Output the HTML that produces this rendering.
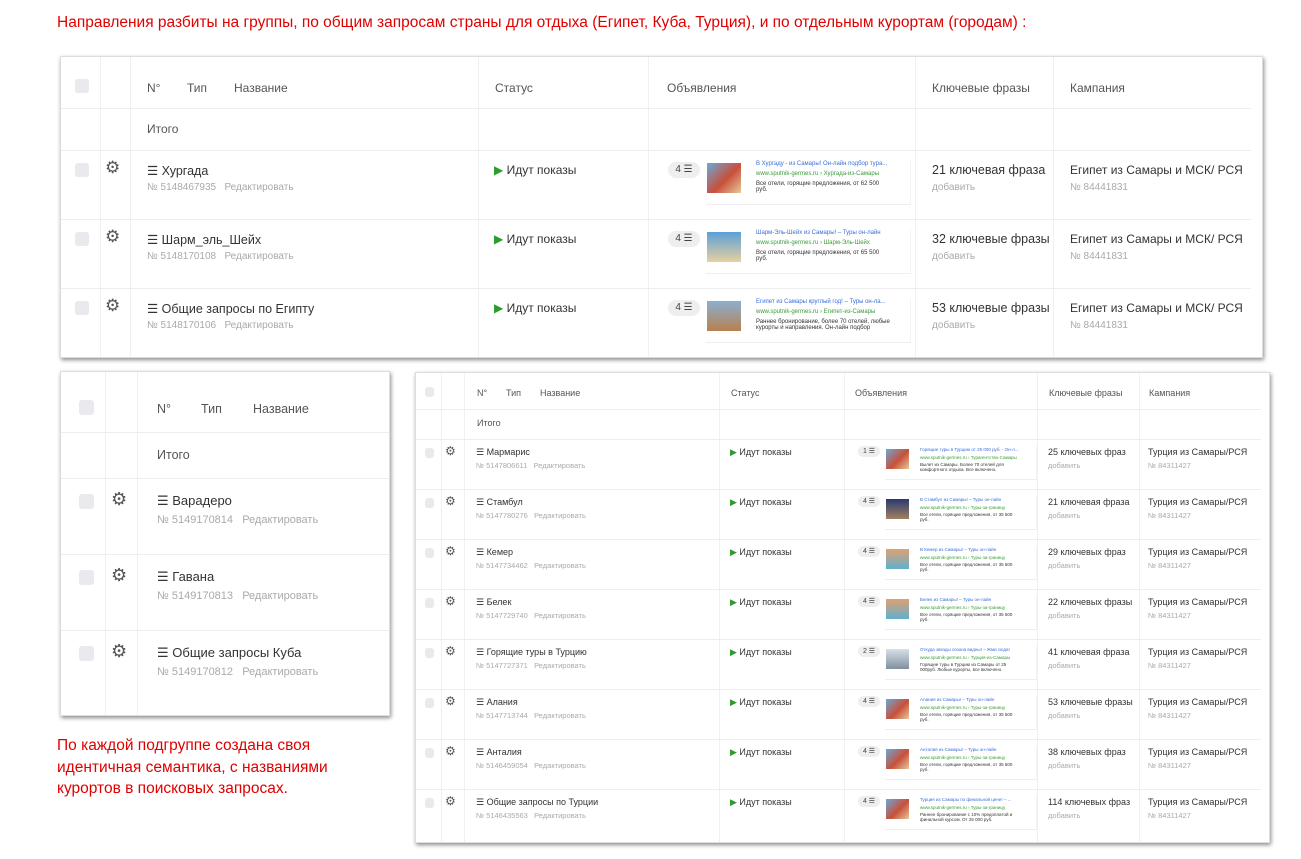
<!DOCTYPE html>
<html><head><meta charset="utf-8"><style>
*{margin:0;padding:0;box-sizing:border-box}
body{width:1301px;height:859px;background:#fff;position:relative;overflow:hidden;font-family:"Liberation Sans","DejaVu Sans",sans-serif;color:#333}
.a{position:absolute;white-space:nowrap}
.red{color:#e00000;font-size:15.5px}
.panel{position:absolute;background:#fff;box-shadow:1px 2px 4px rgba(0,0,0,.45);border:1px solid #ddd}
.hl{position:absolute;height:1px;background:#eee}
.vl{position:absolute;width:1px;background:#f0f0f0}
.cb{position:absolute;background:#e9e9ee;border-radius:3px}
.g{color:#aaa}
.gear{position:absolute;color:#555;font-family:"DejaVu Sans",sans-serif}
.grn{color:#2a9d2a}
.badge{position:absolute;background:#eee;border-radius:8px;color:#444;text-align:center}
.img{position:absolute;background:linear-gradient(135deg,#6aa9d8,#c8503a 55%,#e8c89a)}
.ad{position:absolute;border-bottom:1px solid #eee;border-right:1px solid #f3f3f3}
.blue{color:#3b6fd8}.lg{color:#3a9b3a}
</style></head><body>
<div class="a red" style="left:57px;top:14px">Направления разбиты на группы, по общим запросам страны для отдыха (Египет, Куба, Турция), и по отдельным курортам (городам) :</div>

<!-- Table 1 -->
<div class="panel" style="left:60px;top:56px;width:1203px;height:302px;font-size:12px">
<div class="vl" style="left:39px;top:0;height:300px"></div><div class="vl" style="left:69px;top:0;height:300px"></div>
<div class="vl" style="left:417px;top:0;height:300px"></div><div class="vl" style="left:587px;top:0;height:300px"></div>
<div class="vl" style="left:854px;top:0;height:300px"></div><div class="vl" style="left:992px;top:0;height:300px"></div>
<div class="hl" style="left:0;top:51px;width:1190px"></div><div class="hl" style="left:0;top:93px;width:1190px"></div>
<div class="hl" style="left:0;top:162px;width:1190px"></div><div class="hl" style="left:0;top:231px;width:1190px"></div>
<div class="cb" style="left:14px;top:22px;width:14px;height:14px"></div>
<div class="a" style="left:86px;top:24px;color:#555">N°</div><div class="a" style="left:126px;top:24px;color:#555">Тип</div><div class="a" style="left:173px;top:24px;color:#555">Название</div>
<div class="a" style="left:434px;top:24px;color:#555">Статус</div><div class="a" style="left:606px;top:24px;color:#555">Объявления</div>
<div class="a" style="left:871px;top:24px;color:#555">Ключевые фразы</div><div class="a" style="left:1009px;top:24px;color:#555">Кампания</div>
<div class="a" style="left:86px;top:65px;color:#555">Итого</div>

<div class="cb" style="left:14px;top:106px;width:14px;height:14px"></div><div class="gear a" style="left:44px;top:101px;font-size:17px">⚙</div>
<div class="a" style="left:86px;top:106px;font-size:12.5px">☰ Хургада</div><div class="a g" style="left:86px;top:125px;font-size:10px">№ 5148467935 &nbsp; Редактировать</div>
<div class="a" style="left:433px;top:106px"><span class="grn">▶</span> Идут показы</div>
<div class="badge" style="left:607px;top:105px;width:32px;height:16px;font-size:10px;line-height:16px">4 ☰</div>
<div class="img" style="left:646px;top:106px;width:34px;height:30px"></div>
<div class="ad" style="left:645px;top:104px;width:205px;height:44px"></div>
<div class="a blue" style="left:695px;top:104px;font-size:6px">В Хургаду - из Самары! Он-лайн подбор тура...</div>
<div class="a lg" style="left:695px;top:114px;font-size:6px">www.sputnik-germes.ru › Хургада-из-Самары</div>
<div class="a" style="left:695px;top:124px;font-size:6px">Все отели, горящие предложения, от 62 500<br>руб.</div>
<div class="a" style="left:871px;top:106px;font-size:12.5px">21 ключевая фраза</div><div class="a g" style="left:871px;top:125px;font-size:10px">добавить</div>
<div class="a" style="left:1009px;top:106px;font-size:12px">Египет из Самары и МСК/ РСЯ</div><div class="a g" style="left:1009px;top:125px;font-size:10px">№ 84441831</div>

<div class="cb" style="left:14px;top:175px;width:14px;height:14px"></div><div class="gear a" style="left:44px;top:170px;font-size:17px">⚙</div>
<div class="a" style="left:86px;top:175px;font-size:12.5px">☰ Шарм_эль_Шейх</div><div class="a g" style="left:86px;top:194px;font-size:10px">№ 5148170108 &nbsp; Редактировать</div>
<div class="a" style="left:433px;top:175px"><span class="grn">▶</span> Идут показы</div>
<div class="badge" style="left:607px;top:174px;width:32px;height:16px;font-size:10px;line-height:16px">4 ☰</div>
<div class="img" style="left:646px;top:175px;width:34px;height:30px;background:linear-gradient(#5aa0d8,#e8d0a0)"></div>
<div class="ad" style="left:645px;top:173px;width:205px;height:44px"></div>
<div class="a blue" style="left:695px;top:173px;font-size:6px">Шарм-Эль-Шейх из Самары! – Туры он-лайн</div>
<div class="a lg" style="left:695px;top:183px;font-size:6px">www.sputnik-germes.ru › Шарм-Эль-Шейх</div>
<div class="a" style="left:695px;top:193px;font-size:6px">Все отели, горящие предложения, от 65 500<br>руб.</div>
<div class="a" style="left:871px;top:175px;font-size:12.5px">32 ключевые фразы</div><div class="a g" style="left:871px;top:194px;font-size:10px">добавить</div>
<div class="a" style="left:1009px;top:175px;font-size:12px">Египет из Самары и МСК/ РСЯ</div><div class="a g" style="left:1009px;top:194px;font-size:10px">№ 84441831</div>

<div class="cb" style="left:14px;top:244px;width:14px;height:14px"></div><div class="gear a" style="left:44px;top:239px;font-size:17px">⚙</div>
<div class="a" style="left:86px;top:244px;font-size:12.5px">☰ Общие запросы по Египту</div><div class="a g" style="left:86px;top:263px;font-size:10px">№ 5148170106 &nbsp; Редактировать</div>
<div class="a" style="left:433px;top:244px"><span class="grn">▶</span> Идут показы</div>
<div class="badge" style="left:607px;top:243px;width:32px;height:16px;font-size:10px;line-height:16px">4 ☰</div>
<div class="img" style="left:646px;top:244px;width:34px;height:30px;background:linear-gradient(#8ab0d0,#b88050)"></div>
<div class="ad" style="left:645px;top:242px;width:205px;height:44px"></div>
<div class="a blue" style="left:695px;top:242px;font-size:6px">Египет из Самары круглый год! – Туры он-ла...</div>
<div class="a lg" style="left:695px;top:252px;font-size:6px">www.sputnik-germes.ru › Египет-из-Самары</div>
<div class="a" style="left:695px;top:262px;font-size:6px">Раннее бронирование, более 70 отелей, любые<br>курорты и направления. Он-лайн подбор</div>
<div class="a" style="left:871px;top:244px;font-size:12.5px">53 ключевые фразы</div><div class="a g" style="left:871px;top:263px;font-size:10px">добавить</div>
<div class="a" style="left:1009px;top:244px;font-size:12px">Египет из Самары и МСК/ РСЯ</div><div class="a g" style="left:1009px;top:263px;font-size:10px">№ 84441831</div>
</div>

<!-- Table 2 -->
<div class="panel" style="left:60px;top:371px;width:330px;height:345px;font-size:12.5px">
<div class="vl" style="left:44px;top:0;height:343px"></div><div class="vl" style="left:76px;top:0;height:343px"></div>
<div class="hl" style="left:0;top:60px;width:328px"></div><div class="hl" style="left:0;top:106px;width:328px"></div>
<div class="hl" style="left:0;top:182px;width:328px"></div><div class="hl" style="left:0;top:258px;width:328px"></div>
<div class="cb" style="left:18px;top:28px;width:15px;height:15px"></div>
<div class="a" style="left:96px;top:30px;color:#555">N°</div><div class="a" style="left:140px;top:30px;color:#555">Тип</div><div class="a" style="left:192px;top:30px;color:#555">Название</div>
<div class="a" style="left:96px;top:76px;color:#555">Итого</div>
<div class="cb" style="left:18px;top:122px;width:15px;height:15px"></div><div class="gear a" style="left:50px;top:117px;font-size:18px">⚙</div>
<div class="a" style="left:96px;top:121px;font-size:13px">☰ Варадеро</div><div class="a g" style="left:96px;top:142px;font-size:11px">№ 5149170814 &nbsp; Редактировать</div>
<div class="cb" style="left:18px;top:198px;width:15px;height:15px"></div><div class="gear a" style="left:50px;top:193px;font-size:18px">⚙</div>
<div class="a" style="left:96px;top:197px;font-size:13px">☰ Гавана</div><div class="a g" style="left:96px;top:218px;font-size:11px">№ 5149170813 &nbsp; Редактировать</div>
<div class="cb" style="left:18px;top:274px;width:15px;height:15px"></div><div class="gear a" style="left:50px;top:269px;font-size:18px">⚙</div>
<div class="a" style="left:96px;top:273px;font-size:13px">☰ Общие запросы Куба</div><div class="a g" style="left:96px;top:294px;font-size:11px">№ 5149170812 &nbsp; Редактировать</div>
</div>

<div class="a red" style="left:57px;top:735px;line-height:21.5px">По каждой подгруппе создана своя<br>идентичная семантика, с названиями<br>курортов в поисковых запросах.</div>

<!-- Table 3 -->
<div class="panel" style="left:415px;top:372px;width:855px;height:471px;font-size:9px">
<div class="vl" style="left:25px;top:0;height:469px"></div><div class="vl" style="left:48px;top:0;height:469px"></div>
<div class="vl" style="left:303px;top:0;height:469px"></div><div class="vl" style="left:428px;top:0;height:469px"></div>
<div class="vl" style="left:621px;top:0;height:469px"></div><div class="vl" style="left:723px;top:0;height:469px"></div>
<div class="hl" style="left:0;top:36px;width:845px"></div><div class="hl" style="left:0;top:66px;width:845px"></div>
<div class="hl" style="left:0;top:116px;width:845px"></div><div class="hl" style="left:0;top:166px;width:845px"></div>
<div class="hl" style="left:0;top:216px;width:845px"></div><div class="hl" style="left:0;top:266px;width:845px"></div>
<div class="hl" style="left:0;top:316px;width:845px"></div><div class="hl" style="left:0;top:366px;width:845px"></div>
<div class="hl" style="left:0;top:416px;width:845px"></div>
<div class="cb" style="left:9px;top:14px;width:9px;height:10px"></div>
<div class="a" style="left:61px;top:15px;color:#555">N°</div><div class="a" style="left:90px;top:15px;color:#555">Тип</div><div class="a" style="left:124px;top:15px;color:#555">Название</div>
<div class="a" style="left:315px;top:15px;color:#555">Статус</div><div class="a" style="left:439px;top:15px;color:#555">Объявления</div>
<div class="a" style="left:633px;top:15px;color:#555">Ключевые фразы</div><div class="a" style="left:733px;top:15px;color:#555">Кампания</div>
<div class="a" style="left:61px;top:45px;color:#555">Итого</div>
</div>
<div style="position:absolute;left:415px;top:372px;font-size:9px">
<div class="cb" style="left:10px;top:76px;width:9px;height:10px"></div><div class="gear a" style="left:30px;top:72px;font-size:12px">⚙</div>
<div class="a" style="left:61px;top:75px">☰ Мармарис</div><div class="a g" style="left:61px;top:89px;font-size:7.5px">№ 5147806611 &nbsp; Редактировать</div>
<div class="a" style="left:315px;top:75px"><span class="grn">▶</span> Идут показы</div>
<div class="badge" style="left:443px;top:74px;width:22px;height:11px;font-size:7px;line-height:11px">1 ☰</div>
<div class="img" style="left:471px;top:77px;width:23px;height:20px"></div><div class="ad" style="left:470px;top:74px;width:152px;height:34px"></div>
<div class="a blue" style="left:505px;top:75px;font-size:4.5px">Горящие туры в Турцию от 25 000 руб. - Он-л...</div><div class="a lg" style="left:505px;top:83px;font-size:4.5px">www.sputnik-germes.ru › Турагентство-Самары</div><div class="a" style="left:505px;top:90px;font-size:4.5px">Вылет из Самары. Более 70 отелей для<br>комфортного отдыха. Все включено.</div>
<div class="a" style="left:633px;top:75px">25 ключевых фраз</div><div class="a g" style="left:633px;top:89px;font-size:7.5px">добавить</div>
<div class="a" style="left:733px;top:75px">Турция из Самары/РСЯ</div><div class="a g" style="left:733px;top:89px;font-size:7.5px">№ 84311427</div>

<div class="cb" style="left:10px;top:126px;width:9px;height:10px"></div><div class="gear a" style="left:30px;top:122px;font-size:12px">⚙</div>
<div class="a" style="left:61px;top:125px">☰ Стамбул</div><div class="a g" style="left:61px;top:139px;font-size:7.5px">№ 5147780276 &nbsp; Редактировать</div>
<div class="a" style="left:315px;top:125px"><span class="grn">▶</span> Идут показы</div>
<div class="badge" style="left:443px;top:124px;width:22px;height:11px;font-size:7px;line-height:11px">4 ☰</div>
<div class="img" style="left:471px;top:127px;width:23px;height:20px;background:linear-gradient(#2a3a70,#a08060)"></div><div class="ad" style="left:470px;top:124px;width:152px;height:34px"></div>
<div class="a blue" style="left:505px;top:125px;font-size:4.5px">В Стамбул из Самары! – Туры он-лайн</div><div class="a lg" style="left:505px;top:133px;font-size:4.5px">www.sputnik-germes.ru › Туры-за-границу</div><div class="a" style="left:505px;top:140px;font-size:4.5px">Все отели, горящие предложения, от 35 500<br>руб.</div>
<div class="a" style="left:633px;top:125px">21 ключевая фраза</div><div class="a g" style="left:633px;top:139px;font-size:7.5px">добавить</div>
<div class="a" style="left:733px;top:125px">Турция из Самары/РСЯ</div><div class="a g" style="left:733px;top:139px;font-size:7.5px">№ 84311427</div>

<div class="cb" style="left:10px;top:176px;width:9px;height:10px"></div><div class="gear a" style="left:30px;top:172px;font-size:12px">⚙</div>
<div class="a" style="left:61px;top:175px">☰ Кемер</div><div class="a g" style="left:61px;top:189px;font-size:7.5px">№ 5147734462 &nbsp; Редактировать</div>
<div class="a" style="left:315px;top:175px"><span class="grn">▶</span> Идут показы</div>
<div class="badge" style="left:443px;top:174px;width:22px;height:11px;font-size:7px;line-height:11px">4 ☰</div>
<div class="img" style="left:471px;top:177px;width:23px;height:20px;background:linear-gradient(#e0a070,#60b0d0)"></div><div class="ad" style="left:470px;top:174px;width:152px;height:34px"></div>
<div class="a blue" style="left:505px;top:175px;font-size:4.5px">В Кемер из Самары! – Туры он-лайн</div><div class="a lg" style="left:505px;top:183px;font-size:4.5px">www.sputnik-germes.ru › Туры-за-границу</div><div class="a" style="left:505px;top:190px;font-size:4.5px">Все отели, горящие предложения, от 35 500<br>руб.</div>
<div class="a" style="left:633px;top:175px">29 ключевых фраз</div><div class="a g" style="left:633px;top:189px;font-size:7.5px">добавить</div>
<div class="a" style="left:733px;top:175px">Турция из Самары/РСЯ</div><div class="a g" style="left:733px;top:189px;font-size:7.5px">№ 84311427</div>

<div class="cb" style="left:10px;top:226px;width:9px;height:10px"></div><div class="gear a" style="left:30px;top:222px;font-size:12px">⚙</div>
<div class="a" style="left:61px;top:225px">☰ Белек</div><div class="a g" style="left:61px;top:239px;font-size:7.5px">№ 5147729740 &nbsp; Редактировать</div>
<div class="a" style="left:315px;top:225px"><span class="grn">▶</span> Идут показы</div>
<div class="badge" style="left:443px;top:224px;width:22px;height:11px;font-size:7px;line-height:11px">4 ☰</div>
<div class="img" style="left:471px;top:227px;width:23px;height:20px;background:linear-gradient(#e0a070,#60b0d0)"></div><div class="ad" style="left:470px;top:224px;width:152px;height:34px"></div>
<div class="a blue" style="left:505px;top:225px;font-size:4.5px">Белек из Самары! – Туры он-лайн</div><div class="a lg" style="left:505px;top:233px;font-size:4.5px">www.sputnik-germes.ru › Туры-за-границу</div><div class="a" style="left:505px;top:240px;font-size:4.5px">Все отели, горящие предложения, от 35 500<br>руб.</div>
<div class="a" style="left:633px;top:225px">22 ключевых фразы</div><div class="a g" style="left:633px;top:239px;font-size:7.5px">добавить</div>
<div class="a" style="left:733px;top:225px">Турция из Самары/РСЯ</div><div class="a g" style="left:733px;top:239px;font-size:7.5px">№ 84311427</div>

<div class="cb" style="left:10px;top:276px;width:9px;height:10px"></div><div class="gear a" style="left:30px;top:272px;font-size:12px">⚙</div>
<div class="a" style="left:61px;top:275px">☰ Горящие туры в Турцию</div><div class="a g" style="left:61px;top:289px;font-size:7.5px">№ 5147727371 &nbsp; Редактировать</div>
<div class="a" style="left:315px;top:275px"><span class="grn">▶</span> Идут показы</div>
<div class="badge" style="left:443px;top:274px;width:22px;height:11px;font-size:7px;line-height:11px">2 ☰</div>
<div class="img" style="left:471px;top:277px;width:23px;height:20px;background:linear-gradient(#d8e0e8,#8090a0)"></div><div class="ad" style="left:470px;top:274px;width:152px;height:34px"></div>
<div class="a blue" style="left:505px;top:275px;font-size:4.5px">Откуда звезды сезона видны! – Жми сюда!</div><div class="a lg" style="left:505px;top:283px;font-size:4.5px">www.sputnik-germes.ru › Турция-из-Самары</div><div class="a" style="left:505px;top:290px;font-size:4.5px">Горящие туры в Турцию из Самары от 25<br>000руб. Любые курорты, все включено.</div>
<div class="a" style="left:633px;top:275px">41 ключевая фраза</div><div class="a g" style="left:633px;top:289px;font-size:7.5px">добавить</div>
<div class="a" style="left:733px;top:275px">Турция из Самары/РСЯ</div><div class="a g" style="left:733px;top:289px;font-size:7.5px">№ 84311427</div>

<div class="cb" style="left:10px;top:326px;width:9px;height:10px"></div><div class="gear a" style="left:30px;top:322px;font-size:12px">⚙</div>
<div class="a" style="left:61px;top:325px">☰ Алания</div><div class="a g" style="left:61px;top:339px;font-size:7.5px">№ 5147713744 &nbsp; Редактировать</div>
<div class="a" style="left:315px;top:325px"><span class="grn">▶</span> Идут показы</div>
<div class="badge" style="left:443px;top:324px;width:22px;height:11px;font-size:7px;line-height:11px">4 ☰</div>
<div class="img" style="left:471px;top:327px;width:23px;height:20px"></div><div class="ad" style="left:470px;top:324px;width:152px;height:34px"></div>
<div class="a blue" style="left:505px;top:325px;font-size:4.5px">Алания из Самары! – Туры он-лайн</div><div class="a lg" style="left:505px;top:333px;font-size:4.5px">www.sputnik-germes.ru › Туры-за-границу</div><div class="a" style="left:505px;top:340px;font-size:4.5px">Все отели, горящие предложения, от 35 500<br>руб.</div>
<div class="a" style="left:633px;top:325px">53 ключевые фразы</div><div class="a g" style="left:633px;top:339px;font-size:7.5px">добавить</div>
<div class="a" style="left:733px;top:325px">Турция из Самары/РСЯ</div><div class="a g" style="left:733px;top:339px;font-size:7.5px">№ 84311427</div>

<div class="cb" style="left:10px;top:376px;width:9px;height:10px"></div><div class="gear a" style="left:30px;top:372px;font-size:12px">⚙</div>
<div class="a" style="left:61px;top:375px">☰ Анталия</div><div class="a g" style="left:61px;top:389px;font-size:7.5px">№ 5146459054 &nbsp; Редактировать</div>
<div class="a" style="left:315px;top:375px"><span class="grn">▶</span> Идут показы</div>
<div class="badge" style="left:443px;top:374px;width:22px;height:11px;font-size:7px;line-height:11px">4 ☰</div>
<div class="img" style="left:471px;top:377px;width:23px;height:20px"></div><div class="ad" style="left:470px;top:374px;width:152px;height:34px"></div>
<div class="a blue" style="left:505px;top:375px;font-size:4.5px">Анталия из Самары! – Туры он-лайн</div><div class="a lg" style="left:505px;top:383px;font-size:4.5px">www.sputnik-germes.ru › Туры-за-границу</div><div class="a" style="left:505px;top:390px;font-size:4.5px">Все отели, горящие предложения, от 35 500<br>руб.</div>
<div class="a" style="left:633px;top:375px">38 ключевых фраз</div><div class="a g" style="left:633px;top:389px;font-size:7.5px">добавить</div>
<div class="a" style="left:733px;top:375px">Турция из Самары/РСЯ</div><div class="a g" style="left:733px;top:389px;font-size:7.5px">№ 84311427</div>

<div class="cb" style="left:10px;top:426px;width:9px;height:10px"></div><div class="gear a" style="left:30px;top:422px;font-size:12px">⚙</div>
<div class="a" style="left:61px;top:425px">☰ Общие запросы по Турции</div><div class="a g" style="left:61px;top:439px;font-size:7.5px">№ 5146435563 &nbsp; Редактировать</div>
<div class="a" style="left:315px;top:425px"><span class="grn">▶</span> Идут показы</div>
<div class="badge" style="left:443px;top:424px;width:22px;height:11px;font-size:7px;line-height:11px">4 ☰</div>
<div class="img" style="left:471px;top:427px;width:23px;height:20px"></div><div class="ad" style="left:470px;top:424px;width:152px;height:34px"></div>
<div class="a blue" style="left:505px;top:425px;font-size:4.5px">Турция из Самары по финальной цене! – ...</div><div class="a lg" style="left:505px;top:433px;font-size:4.5px">www.sputnik-germes.ru › Туры-за-границу</div><div class="a" style="left:505px;top:440px;font-size:4.5px">Раннее бронирование с 10% предоплатой и<br>финальной курсом. От 25 000 руб.</div>
<div class="a" style="left:633px;top:425px">114 ключевых фраз</div><div class="a g" style="left:633px;top:439px;font-size:7.5px">добавить</div>
<div class="a" style="left:733px;top:425px">Турция из Самары/РСЯ</div><div class="a g" style="left:733px;top:439px;font-size:7.5px">№ 84311427</div>
</div>
</body></html>
